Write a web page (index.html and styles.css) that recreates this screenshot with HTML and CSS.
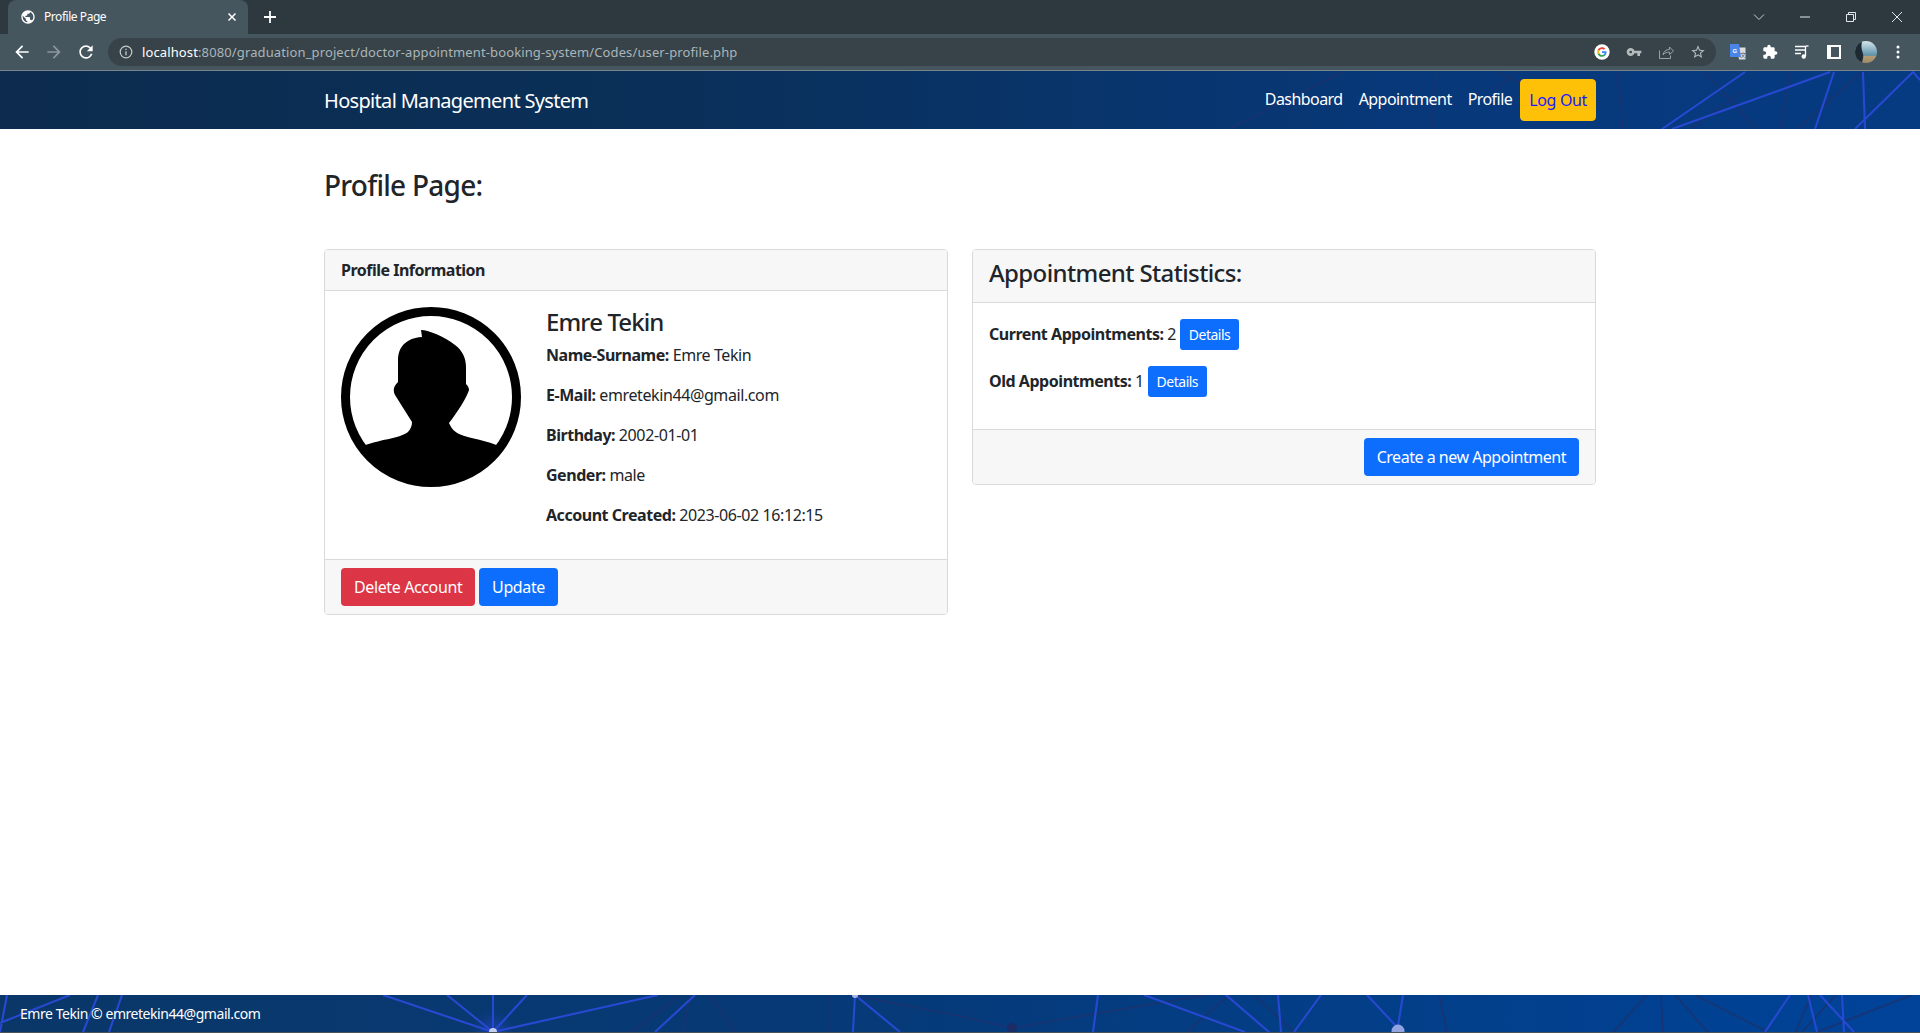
FILE: index.html
```html
<!DOCTYPE html>
<html lang="en">
<head>
    <meta charset="UTF-8">
    <title>Profile Page</title>
    <link rel="stylesheet" href="styles.css">
</head>
<body>
    <div class="tabstrip">
        <div class="tab">
            <svg class="tab-globe" viewBox="0 0 24 24"><path fill="#fff" d="M12 2C6.48 2 2 6.48 2 12s4.48 10 10 10 10-4.48 10-10S17.52 2 12 2zm-1 17.93c-3.95-.49-7-3.85-7-7.93 0-.62.08-1.21.21-1.79L9 15v1c0 1.1.9 2 2 2v1.93zm6.9-2.54c-.26-.81-1-1.39-1.9-1.39h-1v-3c0-.55-.45-1-1-1H8v-2h2c.55 0 1-.45 1-1V7h2c1.1 0 2-.9 2-2v-.41c2.93 1.19 5 4.06 5 7.41 0 2.08-.8 3.97-2.1 5.39z"/></svg>
            <span class="tab-title">Profile Page</span>
            <svg class="tab-close" viewBox="0 0 10 10"><path d="M1.5 1.5l7 7M8.5 1.5l-7 7" stroke="#fff" stroke-width="1.5"/></svg>
        </div>
        <svg class="tab-new" viewBox="0 0 12 12"><path d="M6 0v12M0 6h12" stroke="#fff" stroke-width="1.8"/></svg>
        <div class="window-controls">
            <svg class="win-chevron" viewBox="0 0 12 12"><path d="M1 3.5l5 5 5-5" fill="none" stroke="#c5ccd0" stroke-width="1"/></svg>
            <span class="win-btn"><svg viewBox="0 0 12 12"><path d="M1 6h10" stroke="#e4e8ea" stroke-width="1"/></svg></span>
            <span class="win-btn"><svg viewBox="0 0 12 12"><path d="M1.5 3.500h7v7h-7zM3.500 3.500v-2h7v7h-2" fill="none" stroke="#e4e8ea" stroke-width="1"/></svg></span>
            <span class="win-btn"><svg viewBox="0 0 12 12"><path d="M1 1l10 10M11 1L1 11" stroke="#e4e8ea" stroke-width="1"/></svg></span>
        </div>
    </div>

    <div class="toolbar">
        <svg class="tool-icon" viewBox="0 0 24 24"><path fill="#fff" d="M20 11H7.83l5.59-5.59L12 4l-8 8 8 8 1.41-1.41L7.83 13H20v-2z"/></svg>
        <svg class="tool-icon" viewBox="0 0 24 24"><path fill="#8b979d" d="M4 11h12.170l-5.590-5.590L12 4l8 8-8 8-1.410-1.410L16.170 13H4v-2z"/></svg>
        <svg class="tool-icon" viewBox="0 0 24 24"><path fill="#fff" d="M17.65 6.35A7.958 7.958 0 0 0 12 4c-4.420 0-7.990 3.580-7.990 8s3.570 8 7.990 8c3.730 0 6.840-2.550 7.730-6h-2.080A5.990 5.990 0 0 1 12 18c-3.310 0-6-2.690-6-6s2.690-6 6-6c1.660 0 3.140.690 4.220 1.780L13 11h7V4l-2.350 2.350z"/></svg>
        <div class="omnibox">
            <svg class="omni-info" viewBox="0 0 14 14"><circle cx="7" cy="7" r="5.800" fill="none" stroke="#c3cbcf" stroke-width="1.200"/><path d="M7 6.200v4M7 3.800v1.300" stroke="#c3cbcf" stroke-width="1.300"/></svg>
            <span class="url"><span class="url-host">localhost</span>:8080/graduation_project/doctor-appointment-booking-system/Codes/user-profile.php</span>
            <span class="omni-icons">
                <svg class="omni-icon" viewBox="0 0 24 24"><circle cx="12" cy="12" r="11.500" fill="#fff"/><g transform="translate(4.800 4.800) scale(0.3)"><path fill="#EA4335" d="M24 9.500c3.540 0 6.710 1.220 9.210 3.600l6.850-6.850C35.900 2.380 30.470 0 24 0 14.620 0 6.510 5.380 2.560 13.220l7.980 6.190C12.430 13.720 17.740 9.500 24 9.500z"/><path fill="#4285F4" d="M46.980 24.550c0-1.570-.150-3.090-.380-4.550H24v9.020h12.940c-.580 2.960-2.260 5.480-4.780 7.180l7.730 6c4.510-4.180 7.090-10.360 7.090-17.650z"/><path fill="#FBBC05" d="M10.530 28.590c-.480-1.450-.760-2.990-.760-4.590s.270-3.140.760-4.590l-7.980-6.190C.920 16.460 0 20.120 0 24c0 3.880.920 7.540 2.560 10.780l7.970-6.190z"/><path fill="#34A853" d="M24 48c6.480 0 11.930-2.130 16.020-5.810l-7.730-6c-2.150 1.450-4.920 2.300-8.300 2.300-6.260 0-11.570-4.220-13.470-9.910l-7.980 6.190C6.510 42.620 14.620 48 24 48z"/></g></svg>
                <svg class="omni-icon" viewBox="0 0 24 24"><path fill="#b4bcc0" d="M12.650 10C11.830 7.670 9.610 6 7 6c-3.310 0-6 2.690-6 6s2.690 6 6 6c2.610 0 4.830-1.670 5.650-4H17v4h4v-4h2v-4H12.650zM7 14c-1.100 0-2-.900-2-2s.900-2 2-2 2 .900 2 2-.900 2-2 2z"/></svg>
                <svg class="omni-icon" viewBox="0 0 16 16"><path fill="none" stroke="#98a3a8" stroke-width="1" d="M1.500 6.500v8h11v-3M5 11c.5-3.500 3-5.500 6.500-5.500V3l4 4-4 3.500V8.200C8.500 8 6.500 9 5 11z"/></svg>
                <svg class="omni-icon" viewBox="0 0 24 24"><path fill="#b4bcc0" d="M22 9.240l-7.190-.620L12 2 9.190 8.630 2 9.240l5.460 4.730L5.820 21 12 17.270 18.180 21l-1.630-7.030L22 9.240zM12 15.400l-3.760 2.270 1-4.280-3.320-2.880 4.380-.380L12 6.100l1.710 4.040 4.380.380-3.320 2.880 1 4.280L12 15.400z"/></svg>
            </span>
        </div>
        <div class="ext-icons">
            <svg class="ext-icon" viewBox="0 0 16 16"><path fill="#d9dee0" d="M7 3.500h8.500v12H9z"/><path fill="#4a86e8" d="M0 0h9l2 13H0z"/><text class="translate-g" x="2.500" y="8.500">G</text><text class="translate-a" x="10" y="13">文</text></svg>
            <svg class="ext-icon" viewBox="0 0 24 24"><path fill="#fff" d="M20.500 11H19V7c0-1.100-.900-2-2-2h-4V3.500C13 2.120 11.880 1 10.500 1S8 2.120 8 3.500V5H4c-1.100 0-1.990.900-1.990 2v3.800H3.500c1.490 0 2.700 1.210 2.700 2.700s-1.210 2.700-2.700 2.700H2V20c0 1.100.900 2 2 2h3.800v-1.500c0-1.490 1.210-2.700 2.700-2.700 1.490 0 2.700 1.210 2.700 2.700V22H17c1.100 0 2-.900 2-2v-4h1.500c1.380 0 2.500-1.120 2.500-2.500S21.880 11 20.500 11z"/></svg>
            <svg class="ext-icon" viewBox="0 0 16 16"><path stroke="#fff" stroke-width="1.300" d="M1 2.500h10M1 6h10M1 9.500h6"/><path stroke="#fff" stroke-width="1.300" d="M11.500 2v10"/><path stroke="#fff" stroke-width="1.300" d="M11.500 2h3"/><circle cx="9.800" cy="12.500" r="2.200" fill="#fff"/></svg>
            <svg class="ext-icon" viewBox="0 0 16 16"><path fill="#fff" d="M1 1h14v14H1z"/><path fill="#45565f" d="M5 3h8v10H5z"/></svg>
            <svg class="ext-icon" viewBox="0 0 22 22"><defs><linearGradient id="sky" x1="0" y1="0" x2="0" y2="1"><stop offset="0" stop-color="#d6e6ea"/><stop offset=".65" stop-color="#5d92ab"/><stop offset=".7" stop-color="#b39b74"/><stop offset="1" stop-color="#9c8a68"/></linearGradient></defs><circle cx="11" cy="11" r="11" fill="url(#sky)"/><path fill="#1e2a33" d="M5 1.500C2 3.500 0 7 0 11c0 4.500 2.500 8.500 7 10.300C8 18 9 15 7.500 11 6.500 8 6 5 7 1z"/></svg>
            <svg class="ext-icon" viewBox="0 0 16 16"><g fill="#fff"><circle cx="8" cy="3" r="1.500"/><circle cx="8" cy="8" r="1.500"/><circle cx="8" cy="13" r="1.500"/></g></svg>
        </div>
    </div>

    <nav class="navbar">
        <svg class="net-lines" viewBox="0 0 1920 58" preserveAspectRatio="none">
            <g class="line-dark" transform="translate(0 -71)">
                <path d="M1342 72L1228 129M1436 72L1432 129M1498 72L1553 100M1517 72L1494 90M1618 72L1623 129M1705 72L1757 129M1790 72L1782 129M1862 72L1797 129M1745 90L1690 129"/>
            </g>
            <g class="line-bright" transform="translate(0 -71)">
                <path d="M1662 129L1745 72M1672 129L1830 72M1815 129L1834 72M1865 129L1863 72M1855 129L1913 72L1920 80"/>
            </g>
        </svg>
        <div class="nav-inner">
            <a class="brand" href="#">Hospital Management System</a>
            <ul class="nav-links">
                <li><a class="nav-link" href="#">Dashboard</a></li>
                <li><a class="nav-link" href="#">Appointment</a></li>
                <li><a class="nav-link" href="#">Profile</a></li>
                <li><a class="nav-link btn-logout" href="#">Log Out</a></li>
            </ul>
        </div>
    </nav>

    <main class="content">
        <h2 class="page-title">Profile Page:</h2>
        <div class="columns">
            <section class="card">
                <div class="card-header"><b class="profile-heading">Profile Information</b></div>
                <div class="card-body profile-body">
                    <svg class="avatar" viewBox="0 0 180 180">
                        <circle cx="90" cy="90" r="85.500" fill="#fff" stroke="#000" stroke-width="9"/>
                        <path d="M20 140C38 132 58 132 67 125C70 122 71 118 71 115L54 88C52 84 52 80 57 75L57 53C57 45 60 38 67 34C72 31 77 30 81 30L80 23C88 23 104 30 114 38C122 44 125 52 125 60L125 77C127 79 128 81 128 83C126 90 116 106 108 116C110 120 112 124 118 127C130 132 146 133 160 140A85 85 0 0 1 20 140Z"/>
                    </svg>
                    <div class="profile-info">
                        <h4 class="profile-name">Emre Tekin</h4>
                        <p><b>Name-Surname:</b> Emre Tekin</p>
                        <p><b>E-Mail:</b> emretekin44@gmail.com</p>
                        <p><b>Birthday:</b> 2002-01-01</p>
                        <p><b>Gender:</b> male</p>
                        <p><b>Account Created:</b> 2023-06-02 16:12:15</p>
                    </div>
                </div>
                <div class="card-footer">
                    <a class="btn btn-danger" href="#">Delete Account</a>
                    <a class="btn btn-primary" href="#">Update</a>
                </div>
            </section>

            <section class="card card-stats">
                <div class="card-header"><h4 class="stats-title">Appointment Statistics:</h4></div>
                <div class="card-body">
                    <p><b>Current Appointments:</b> 2 <a class="btn btn-primary btn-sm" href="#">Details</a></p>
                    <p><b>Old Appointments:</b> 1 <a class="btn btn-primary btn-sm" href="#">Details</a></p>
                </div>
                <div class="card-footer text-right">
                    <a class="btn btn-primary btn-wide" href="#">Create a new Appointment</a>
                </div>
            </section>
        </div>
    </main>

    <footer class="footer">
        <svg class="net-lines" viewBox="0 0 1920 37" preserveAspectRatio="none">
            <circle class="node-glow" cx="493" cy="37" r="14"/>
            <g class="line-dark" transform="translate(0 -995)">
                <path d="M680 995L631 1032M710 995L735 1032M690 995L683 1032M857 996L960 1016L1012 1028L1205 995M830 995L829 1032M1229 995L1187 1032M1254 995L1294 1032M1439 995L1447 1032M1646 995L1614 1032M1661 995L1663 1032M1675 995L1708 1032M1695 995L1768 1032M1811 995L1796 1032M1836 995L1802 1032M1912 995L1817 1032"/>
            </g>
            <g class="line-bright" transform="translate(0 -995)">
                <path d="M383 995L493 1032M447 995L493 1032M493 995L493 1032M527 995L493 1032M658 995L493 1032M70 995L0 1023M7 995L0 1032M98 995L83 1032M122 995L109 1032M695 995L655 1032M855 995L853 1032M855 995L900 1032M1098 995L1093 1032M1144 995L1245 1032M1226 995L1269 1032M1278 995L1281 1032M1321 995L1294 1032M1367 995L1396 1026M1403 995L1398 1026M1790 995L1765 1032M1808 995L1817 1032M1820 995L1854 1032M1842 995L1844 1032"/>
            </g>
            <circle cx="493" cy="37" r="4" fill="#c4cff0"/>
            <circle cx="855" cy="0" r="3" fill="#a9b8e8"/>
            <circle cx="1398" cy="36" r="6.500" fill="#93a5e0"/>
            <circle cx="1012" cy="33" r="5" fill="#1c2c66"/>
        </svg>
        <span class="footer-text">Emre Tekin © emretekin44@gmail.com</span>
    </footer>
</body>
</html>
```

FILE: styles.css
```css
html, body {
    height: 100%;
    margin: 0;
}
body {
    display: flex;
    flex-direction: column;
    font-family: "Noto Sans", Arial, sans-serif;
    font-size: 16px;
    line-height: 1.5;
    color: #212529;
    letter-spacing: -0.4px;
    background: #fff;
    overflow: hidden;
}
a {
    text-decoration: none;
}
p {
    margin: 0 0 16px;
}
b {
    font-weight: 700;
    letter-spacing: -0.46px;
}

/* browser chrome */
.tabstrip {
    height: 34px;
    display: flex;
    align-items: center;
    background: #2e393f;
    flex: none;
}
.tab {
    width: 240px;
    height: 34px;
    margin-left: 8px;
    box-sizing: border-box;
    display: flex;
    align-items: center;
    padding: 0 11px 0 12px;
    background: #45565f;
    border-radius: 8px 8px 0 0;
    color: #fff;
}
.tab-globe {
    width: 16px;
    height: 16px;
}
.tab-title {
    flex: 1;
    margin-left: 8px;
    font-size: 12px;
    letter-spacing: -0.45px;
}
.tab-close {
    width: 10px;
    height: 10px;
}
.tab-new {
    width: 12px;
    height: 12px;
    margin-left: 16px;
}
.window-controls {
    margin-left: auto;
    display: flex;
    align-items: center;
}
.win-chevron {
    width: 12px;
    height: 12px;
    margin-right: 17px;
}
.win-btn {
    width: 46px;
    height: 27px;
    display: flex;
    align-items: center;
    justify-content: center;
}
.win-btn svg {
    width: 12px;
    height: 12px;
}
.toolbar {
    height: 36px;
    display: flex;
    align-items: center;
    padding-left: 12px;
    background: #45565f;
    border-bottom: 1px solid #79858b;
    flex: none;
}
.tool-icon {
    width: 20px;
    height: 20px;
    margin-right: 12px;
}
.omnibox {
    width: 1608px;
    height: 28px;
    display: flex;
    align-items: center;
    padding-left: 11px;
    box-sizing: border-box;
    background: #374349;
    border-radius: 14px;
}
.omni-info {
    width: 14px;
    height: 14px;
}
.url {
    margin-left: 9px;
    padding-top: 1px;
    font-size: 13px;
    letter-spacing: 0.12px;
    color: #aab5ba;
}
.url-host {
    color: #fff;
}
.omni-icons {
    margin-left: auto;
    display: flex;
    align-items: center;
    gap: 16px;
    padding-right: 10px;
}
.omni-icon {
    width: 16px;
    height: 16px;
}
.ext-icons {
    display: flex;
    align-items: center;
    gap: 16px;
    margin-left: 14px;
}
.ext-icon {
    width: 16px;
    height: 16px;
}
.ext-icons .ext-icon:nth-child(5) {
    width: 22px;
    height: 22px;
    margin: 0 -3px;
}
.translate-g {
    font-family: "Liberation Sans", sans-serif;
    font-size: 6px;
    font-weight: 700;
    fill: #fff;
}
.translate-a {
    font-family: "Noto Sans CJK SC", sans-serif;
    font-size: 6px;
    fill: #555;
}

/* navbar */
.navbar {
    position: relative;
    height: 58px;
    flex: none;
    background: linear-gradient(90deg, #0c2b4e 0%, #0a3059 35%, #07387a 75%, #063b82 100%);
}
.net-lines {
    position: absolute;
    left: 0;
    top: 0;
    width: 100%;
    height: 100%;
}
.line-dark path {
    fill: none;
    stroke: #1b3370;
    stroke-width: 1.500;
}
.line-bright path {
    fill: none;
    stroke: #2749d2;
    stroke-width: 2.100;
}
.node-glow {
    fill: #2749d2;
    opacity: 0.45;
    filter: blur(6px);
}
.nav-inner {
    position: relative;
    height: 58px;
    width: 1272px;
    margin: 0 auto;
    display: flex;
    align-items: flex-start;
    justify-content: space-between;
    padding-top: 8px;
    box-sizing: border-box;
}
.brand {
    font-size: 20px;
    line-height: 30px;
    padding: 7px 0 3px;
    letter-spacing: -0.68px;
    color: #fff;
}
.nav-links {
    list-style: none;
    display: flex;
    margin: 0;
    padding: 0;
}
.nav-link {
    display: block;
    padding: 8px;
    letter-spacing: -0.55px;
    color: #fff;
}
.btn-logout {
    border: 1px solid #ffc107;
    border-radius: 4px;
    background: #ffc107;
    letter-spacing: -0.35px;
    color: #1a1aff;
}

/* page */
.content {
    flex: 1;
    width: 1272px;
    margin: 0 auto;
}
.page-title {
    margin: 39px 0 0;
    font-size: 28px;
    font-weight: 500;
    line-height: 34px;
    height: 81px;
    letter-spacing: -0.75px;
}
.columns {
    display: flex;
    gap: 24px;
    align-items: flex-start;
}
.card {
    flex: 1;
    border: 1px solid #d9d9d9;
    border-radius: 4px;
    overflow: hidden;
}
.card-header {
    padding: 8px 16px;
    background: #f7f7f7;
    border-bottom: 1px solid #d9d9d9;
}
.profile-heading {
    letter-spacing: -0.5px;
}
.stats-title {
    margin: 0 0 6px;
    padding-top: 1px;
    letter-spacing: -0.62px;
}
.card-body {
    padding: 16px;
}
.profile-body {
    display: flex;
}
.avatar {
    width: 180px;
    height: 180px;
    flex: none;
}
.profile-info {
    margin-left: 25px;
    min-width: 0;
}
h4 {
    font-size: 24px;
    font-weight: 500;
    line-height: 1.2;
}
.profile-name {
    margin: 0 0 6px;
    padding-top: 1px;
    letter-spacing: -0.88px;
}
.card-footer {
    padding: 8px 16px;
    background: #f7f7f7;
    border-top: 1px solid #d9d9d9;
}
.text-right {
    text-align: right;
}
.btn {
    display: inline-block;
    padding: 6px 12px;
    border: 1px solid transparent;
    border-radius: 4px;
    letter-spacing: -0.38px;
    color: #fff;
}
.btn-wide {
    letter-spacing: -0.48px;
}
.btn-primary {
    background: #0d6efd;
}
.btn-danger {
    background: #dc3545;
}
.btn-sm {
    padding: 4px 8px;
    font-size: 14px;
    border-radius: 3px;
    letter-spacing: -0.5px;
}

/* footer */
.footer {
    position: relative;
    height: 37px;
    flex: none;
    display: flex;
    align-items: center;
    padding-left: 20px;
    background: linear-gradient(90deg, #0a3768 0%, #063a78 45%, #004399 100%);
    border-bottom: 1px solid #4a5358;
}
.footer-text {
    position: relative;
    font-size: 14px;
    letter-spacing: -0.45px;
    color: #fff;
}
```
